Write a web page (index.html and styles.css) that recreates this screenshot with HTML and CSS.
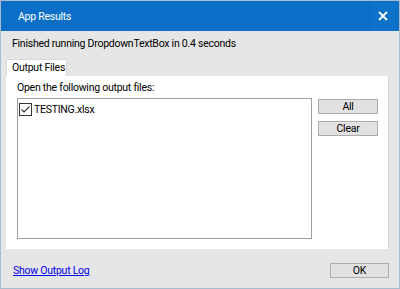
FILE: index.html
```html
<!DOCTYPE html>
<html lang="en">

<head>
    <meta charset="UTF-8" />
    <meta name="viewport" content="width=device-width, initial-scale=1.0" />
    <title>App Results</title>
    <link rel="stylesheet" href="styles.css">
</head>

<body>
    <div class="window">
        <header class="titlebar">
            <span class="title">App Results</span>
            <span class="close">
                <svg width="10" height="10" viewBox="0 0 10 10">
                    <path d="M1 1 L9 9 M9 1 L1 9" stroke="#fff" stroke-width="1.8" />
                </svg>
            </span>
        </header>

        <div class="content">
            <p class="message">Finished running DropdownTextBox in 0.4 seconds</p>

            <div class="tabs">
                <div class="tab">Output Files</div>
            </div>

            <div class="panel">
                <div class="list-area">
                    <div class="label">Open the following output files:</div>
                    <div class="listbox">
                        <div class="item">
                            <span class="check">
                                <svg width="13" height="13" viewBox="0 0 13 13">
                                    <rect x="0.5" y="0.5" width="12" height="12" fill="#fff" stroke="#333" />
                                    <path d="M2.5 6.5 L5 9 L10.5 3.5" fill="none" stroke="#333" stroke-width="1.1" />
                                </svg>
                            </span>
                            TESTING.xlsx
                        </div>
                    </div>
                </div>
                <div class="side-buttons">
                    <button class="btn">All</button>
                    <button class="btn">Clear</button>
                </div>
            </div>

            <footer class="footer">
                <a href="#" class="log-link">Show Output Log</a>
                <button class="btn ok">OK</button>
            </footer>
        </div>
    </div>
</body>

</html>
```

FILE: styles.css
```css
* {
    box-sizing: border-box;
}

body {
    margin: 0;
    font-family: Roboto, "Noto Sans", Arial, sans-serif;
    font-size: 10.5px;
    letter-spacing: -0.25px;
    color: #000;
    background: #fff;
}

.window {
    width: 400px;
    height: 289px;
    border: 1px solid #a9bccf;
    background: #e6e6e6;
    display: flex;
    flex-direction: column;
}

.titlebar {
    height: 30px;
    flex-shrink: 0;
    background: #0b6fc8;
    color: #fff;
    display: flex;
    align-items: center;
    justify-content: space-between;
}

.title {
    padding-left: 17px;
}

.close {
    width: 24px;
    height: 29px;
    margin-right: 4px;
    display: flex;
    align-items: center;
    justify-content: center;
    background: #0d72c9;
}

.content {
    flex: 1;
    display: flex;
    flex-direction: column;
    padding: 0 10px 0 5px;
}

.message {
    margin: 2px 0 0 6px;
    height: 22px;
    line-height: 22px;
}

.tabs {
    display: flex;
    margin-top: 4px;
}

.tab {
    background: #fff;
    border: 1px solid #d9d9d9;
    border-bottom: none;
    height: 17px;
    padding: 0 5px;
    line-height: 16px;
    width: 61px;
    white-space: nowrap;
}

.panel {
    background: #fff;
    height: 173px;
    width: 383px;
    flex-shrink: 0;
    border-right: 1px solid #d5d5d5;
    display: flex;
    padding: 3px 10px 10px 11px;
    gap: 6px;
}

.list-area {
    display: flex;
    flex-direction: column;
}

.label {
    height: 19px;
    line-height: 18px;
}

.listbox {
    width: 295px;
    height: 141px;
    border: 1px solid #a0a0a0;
    padding: 2px 0 0 1px;
}

.item {
    display: flex;
    align-items: center;
    gap: 2px;
    height: 16px;
}

.check {
    display: flex;
}

.side-buttons {
    display: flex;
    flex-direction: column;
    gap: 7px;
    padding-top: 20px;
}

.btn {
    font-family: Roboto, "Noto Sans", Arial, sans-serif;
    font-size: 10.5px;
    letter-spacing: -0.25px;
    width: 60px;
    height: 15px;
    padding: 0;
    line-height: 13px;
    background: #e1e1e1;
    border: 1px solid #adadad;
    color: #000;
}

.footer {
    display: flex;
    justify-content: space-between;
    align-items: center;
    padding: 14px 0 0 7px;
}

.log-link {
    color: #0000ee;
    text-decoration: underline;
}

.ok {
    width: 59px;
}
```
